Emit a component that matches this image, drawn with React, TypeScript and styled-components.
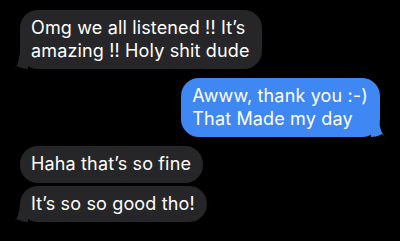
import React from "react";
import styled, { createGlobalStyle } from "styled-components";

const Global = createGlobalStyle`
  html, body { margin: 0; padding: 0; background: #000; }
  body { width: 400px; height: 241px; overflow: hidden; }
`;

const Thread = styled.div`
  display: flex;
  flex-direction: column;
  padding: 10px 20px 0 20px;
  font-family: Inter, "Liberation Sans", sans-serif;
  font-size: 18px;
  line-height: 22.5px;
  color: #fff;
`;

const Group = styled.div<{ $mine?: boolean }>`
  display: flex;
  flex-direction: column;
  align-items: ${(p) => (p.$mine ? "flex-end" : "flex-start")};
  gap: 3px;
  margin-bottom: 9px;
`;

const Bubble = styled.div<{ $mine?: boolean }>`
  position: relative;
  background: ${(p) => (p.$mine ? "#3f87f2" : "#262628")};
  border-radius: 18px;
  padding: 7px 12px 7px 11px;
  letter-spacing: 0.15px;
`;

const Tail = styled.svg<{ $mine?: boolean }>`
  position: absolute;
  bottom: 0;
  width: 14px;
  height: 18px;
  ${(p) => (p.$mine ? "right: -5px;" : "left: -6px;")}
`;

const LeftTail = ({ color }: { color: string }) => (
  <Tail viewBox="0 0 14 18">
    <path d="M14 0 L14 18 C10 18 6 17 3 15 C1 17 0 17.5 0 17.5 C3 15 5 11 6 0 Z" fill={color} />
  </Tail>
);

const RightTail = ({ color }: { color: string }) => (
  <Tail $mine viewBox="0 0 14 18">
    <path d="M0 0 L0 18 C4 18 8 17 11 15 C13 17 14 17.5 14 17.5 C11 15 9 11 8 0 Z" fill={color} />
  </Tail>
);

export default function App() {
  return (
    <>
      <Global />
      <Thread>
        <Group>
          <Bubble>
            <LeftTail color="#262628" />
            Omg we all listened !! It’s
            <br />
            amazing !! Holy shit dude
          </Bubble>
        </Group>
        <Group $mine>
          <Bubble $mine>
            <RightTail color="#3f87f2" />
            Awww, thank you :-)
            <br />
            That Made my day
          </Bubble>
        </Group>
        <Group>
          <Bubble>Haha that’s so fine</Bubble>
          <Bubble>
            <LeftTail color="#262628" />
            It’s so so good tho!
          </Bubble>
        </Group>
      </Thread>
    </>
  );
}
